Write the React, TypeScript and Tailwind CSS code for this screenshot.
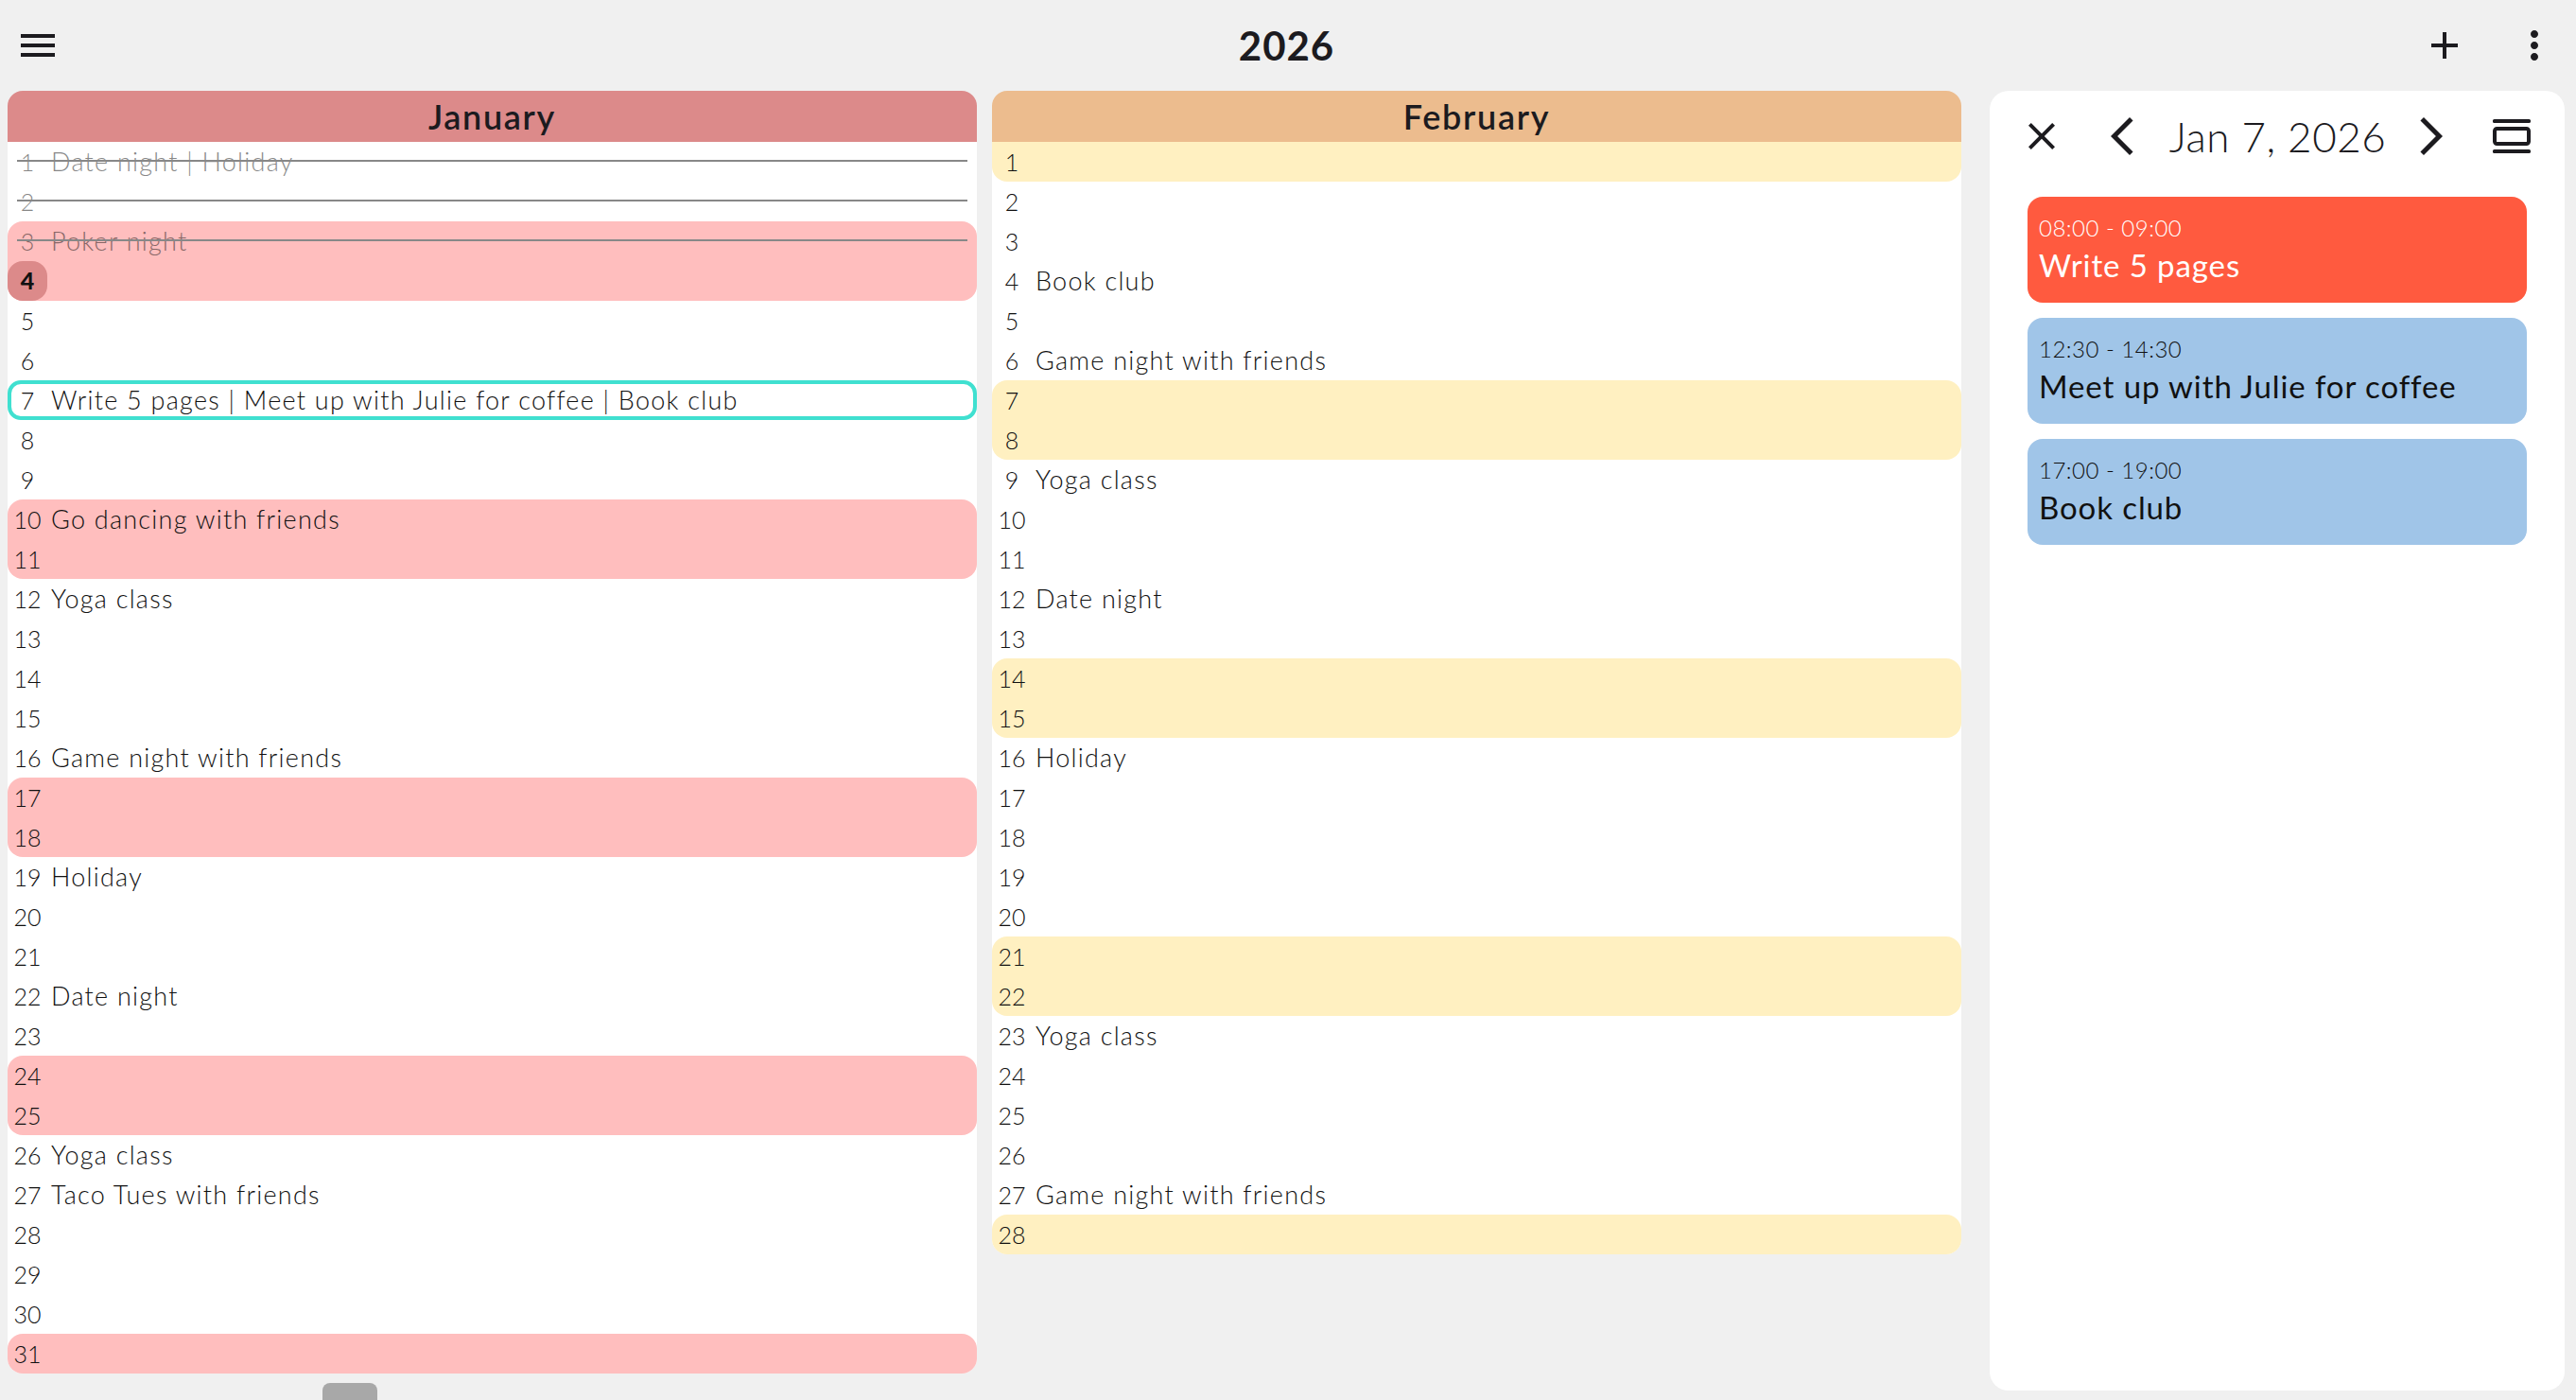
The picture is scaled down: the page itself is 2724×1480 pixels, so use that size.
/**
 * App.tsx
 * Year planner: two month columns with a day detail panel on the right.
 */
const fontStack = 'font-[Lato,"Noto_Sans",sans-serif]';

type Month = {
  name: string;
  headerClass: string;
  weekendClass: string;
  days: number;
  weekends: number[];
  events: Record<number, string>;
};

const months: Month[] = [
  {
    name: 'January',
    headerClass: 'bg-[#dc8a8a]',
    weekendClass: 'bg-[#ffbebe]',
    days: 31,
    weekends: [3, 4, 10, 11, 17, 18, 24, 25, 31],
    events: {
      1: 'Date night | Holiday',
      3: 'Poker night',
      7: 'Write 5 pages | Meet up with Julie for coffee | Book club',
      10: 'Go dancing with friends',
      12: 'Yoga class',
      16: 'Game night with friends',
      19: 'Holiday',
      22: 'Date night',
      26: 'Yoga class',
      27: 'Taco Tues with friends',
    },
  },
  {
    name: 'February',
    headerClass: 'bg-[#ecbc8e]',
    weekendClass: 'bg-[#fff0c1]',
    days: 28,
    weekends: [1, 7, 8, 14, 15, 21, 22, 28],
    events: {
      4: 'Book club',
      6: 'Game night with friends',
      9: 'Yoga class',
      12: 'Date night',
      16: 'Holiday',
      23: 'Yoga class',
      27: 'Game night with friends',
    },
  },
];

const dayEvents = [
  { time: '08:00 - 09:00', title: 'Write 5 pages', cardClass: 'bg-[#ff5a3f] text-white' },
  { time: '12:30 - 14:30', title: 'Meet up with Julie for coffee', cardClass: 'bg-[#a0c5e8] text-[#111111]' },
  { time: '17:00 - 19:00', title: 'Book club', cardClass: 'bg-[#a0c5e8] text-[#111111]' },
];

function Icon({ d }: { d: string }) {
  return (
    <svg viewBox="0 0 24 24" className="w-12 h-12 shrink-0 fill-[#1c1b1f]">
      <path d={d} />
    </svg>
  );
}

function ViewDayIcon() {
  return (
    <svg viewBox="0 0 24 24" className="w-12 h-12 shrink-0 fill-[#1c1b1f]">
      <rect x="2" y="3" width="20" height="2" rx="0.8" />
      <rect x="3" y="8" width="18" height="8" rx="1.2" fill="none" stroke="#1c1b1f" strokeWidth="2" />
      <rect x="2" y="19" width="20" height="2" rx="0.8" />
    </svg>
  );
}

function DayRow({ month, day }: { month: Month; day: number }) {
  const isWeekend = month.weekends.includes(day);
  const prevWeekend = month.weekends.includes(day - 1);
  const nextWeekend = month.weekends.includes(day + 1);
  const isJanuary = month.name === 'January';
  const isPast = isJanuary && day < 4;
  const isToday = isJanuary && day === 4;
  const isSelected = isJanuary && day === 7;
  const event = month.events[day];

  let rowClass = 'relative flex h-[42px] items-center text-[27px] tracking-[1.25px] text-[#111111] font-light';
  if (isWeekend) {
    rowClass += ' ' + month.weekendClass;
    // first row sits flush under the month header
    if (!prevWeekend && day > 1) rowClass += ' rounded-t-[16px]';
    if (!nextWeekend) rowClass += ' rounded-b-[16px]';
  }

  return (
    <div className={rowClass}>
      <span
        className={
          isToday
            ? 'flex w-[42px] h-[42px] shrink-0 items-center justify-center rounded-[16px] bg-[#dc8a8a] text-[25px] tracking-normal font-black'
            : isPast
              ? 'w-[42px] shrink-0 pt-[1px] text-center text-[25px] tracking-normal opacity-50'
              : 'w-[42px] shrink-0 pt-[1px] text-center text-[25px] tracking-normal'
        }
      >
        {day}
      </span>
      {event && (
        <span className={isPast ? 'ml-[4px] whitespace-nowrap pt-[1px] opacity-50' : 'ml-[4px] whitespace-nowrap pt-[1px]'}>{event}</span>
      )}
      {isPast && <div className="absolute left-[10px] right-[10px] top-[19px] h-[2px] bg-[#888888]" />}
      {isSelected && <div className="absolute inset-0 rounded-[14px] border-[4px] border-[#40e0d0]" />}
    </div>
  );
}

function MonthColumn({ month }: { month: Month }) {
  const dayNumbers = Array.from({ length: month.days }, (_, i) => i + 1);
  return (
    <div className="flex w-[1025px] shrink-0 flex-col">
      <div className={`flex h-[54px] items-center justify-center rounded-t-[16px] text-[36px] font-semibold tracking-[1.7px] text-[#1c1b1f] ${month.headerClass}`}>
        {month.name}
      </div>
      <div className="rounded-b-[16px] bg-white">
        {dayNumbers.map((day) => (
          <DayRow key={day} month={month} day={day} />
        ))}
      </div>
    </div>
  );
}

export default function App() {
  return (
    <div className={`flex h-[1480px] w-[2724px] flex-col overflow-hidden bg-[#f0f0f0] ${fontStack}`}>
      {/* Top bar */}
      <div className="flex h-[96px] shrink-0 items-center pl-4 pr-[20px]">
        <div className="w-[144px] shrink-0">
          <Icon d="M3 18h18v-2H3v2zm0-5h18v-2H3v2zm0-7v2h18V6H3z" />
        </div>
        <div className="flex-1 text-center text-[42px] font-bold tracking-[1px] text-[#1c1b1f]">2026</div>
        <div className="flex items-center gap-[47px]">
          <Icon d="M19 13h-6v6h-2v-6H5v-2h6V5h2v6h6v2z" />
          <Icon d="M12 8c1.1 0 2-.9 2-2s-.9-2-2-2-2 .9-2 2 .9 2 2 2zm0 2c-1.1 0-2 .9-2 2s.9 2 2 2 2-.9 2-2-.9-2-2-2zm0 6c-1.1 0-2 .9-2 2s.9 2 2 2 2-.9 2-2-.9-2-2-2z" />
        </div>
      </div>

      {/* Body */}
      <div className="flex flex-1 items-start pl-2">
        <div className="flex flex-col">
          <div className="flex items-start gap-4">
            {months.map((month) => (
              <MonthColumn key={month.name} month={month} />
            ))}
          </div>
          <div className="ml-[333px] mt-[10px] h-[18px] w-[58px] rounded-t-[8px] bg-[#a8a8a8]" />
        </div>

        {/* Day panel */}
        <div className="ml-[30px] flex h-[1374px] w-[608px] shrink-0 flex-col rounded-[20px] bg-white pt-6">
          <div className="flex h-12 items-center pl-[31px] pr-[32px]">
            <Icon d="M19 6.41 17.59 5 12 10.59 6.41 5 5 6.41 10.59 12 5 17.59 6.41 19 12 13.41 17.59 19 19 17.59 13.41 12z" />
            <div className="ml-[37px]">
              <Icon d="M17.77 3.77 16 2 6 12l10 10 1.77-1.77L9.54 12z" />
            </div>
            <div className="flex-1 pl-[2px] text-center text-[44px] font-light tracking-[0.5px] text-[#1c1b1f]">Jan 7, 2026</div>
            <Icon d="M6.23 20.23 8 22l10-10L8 2 6.23 3.77 14.46 12z" />
            <div className="ml-[37px]">
              <ViewDayIcon />
            </div>
          </div>
          <div className="mt-10 flex flex-col gap-4 px-10">
            {dayEvents.map((item) => (
              <div key={item.time} className={`flex h-[112px] flex-col justify-center rounded-[16px] pb-[2px] pl-3 ${item.cardClass}`}>
                <div className="text-[24px] font-light leading-[34px] tracking-[0.5px]">{item.time}</div>
                <div className="text-[33px] leading-[44px] tracking-[0.9px]">{item.title}</div>
              </div>
            ))}
          </div>
        </div>
      </div>
    </div>
  );
}
